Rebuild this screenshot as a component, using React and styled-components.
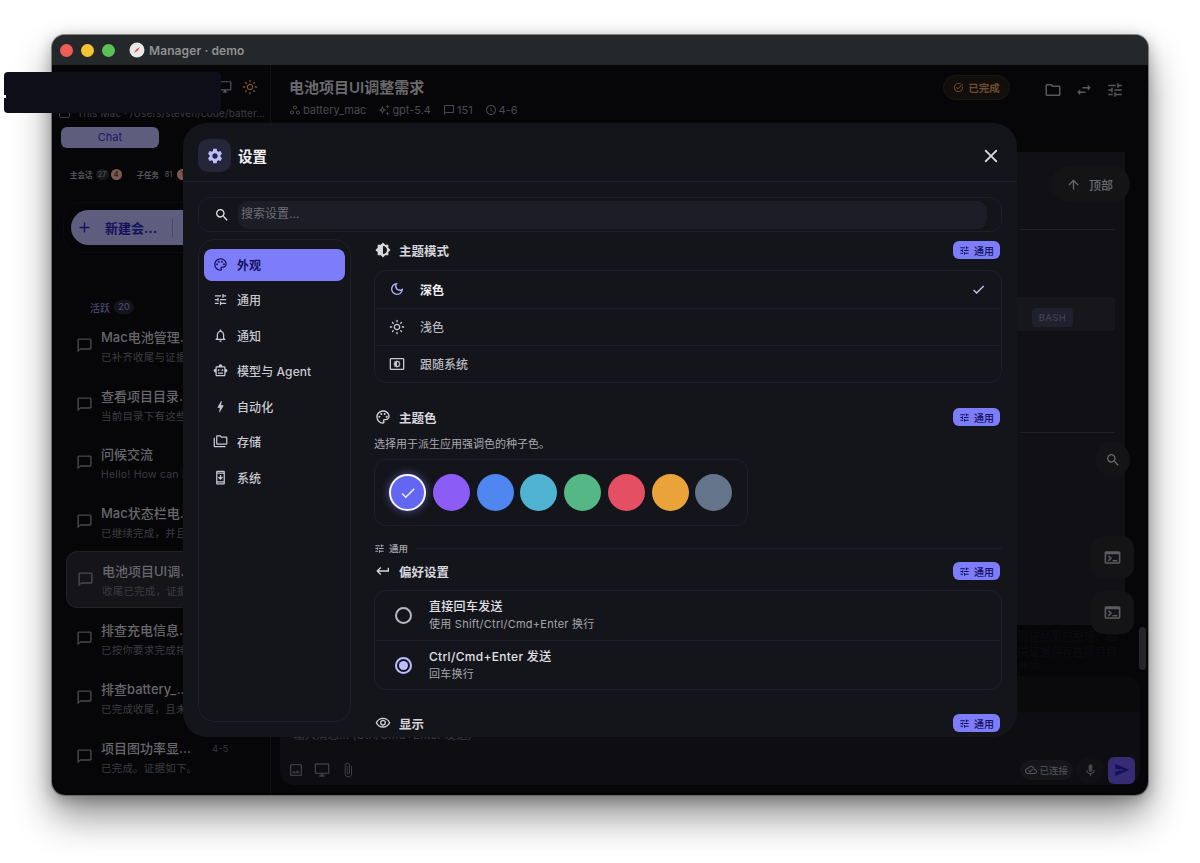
import React from 'react';
import styled, { createGlobalStyle } from 'styled-components';
import {
  MdAdd, MdArrowUpward, MdBolt, MdBrightnessMedium, MdCheck, MdClose, MdKeyboardReturn,
  MdOutlineAttachFile, MdOutlineAutoAwesome, MdOutlineChatBubbleOutline, MdOutlineCloudDone,
  MdOutlineDarkMode, MdOutlineDesktopWindows, MdOutlineFolder, MdOutlineFolderCopy, MdOutlineImage,
  MdOutlineLightMode, MdOutlineMic, MdOutlineNotifications, MdOutlinePalette, MdOutlineSchedule,
  MdOutlineSecurityUpdate, MdOutlineSettingsBrightness, MdOutlineSmartToy, MdOutlineTaskAlt,
  MdOutlineVisibility, MdOutlineWorkspaces, MdSearch, MdSend, MdSettings, MdSwapHoriz, MdTerminal, MdTune,
} from 'react-icons/md';

const GlobalStyle = createGlobalStyle`
  html, body { margin: 0; padding: 0; background: #fff; }
  body { font-family: Inter, "Noto Sans CJK SC", sans-serif; }
  * { box-sizing: border-box; }
`;

const Page = styled.div`
  width: 1200px;
  height: 863px;
  padding: 35px 52px 68px;
  background: #fff;
  overflow: hidden;
`;

const Window = styled.div`
  position: relative;
  width: 1096px;
  height: 760px;
  border-radius: 13px;
  box-shadow: 0 0 0 1px rgba(90, 90, 90, 0.7), 0 22px 38px rgba(0, 0, 0, 0.42), 0 4px 16px rgba(0, 0, 0, 0.3);
`;

const Frame = styled.div`
  display: flex;
  flex-direction: column;
  height: 100%;
  border-radius: 13px;
  overflow: hidden;
  background: #060608;
`;

const TitleBar = styled.div`
  height: 30px;
  flex: none;
  display: flex;
  align-items: center;
  padding-left: 8px;
  background: #25282a;
  color: #8f9193;
  font-size: 12px;
  font-weight: 600;
  letter-spacing: 0.1px;
`;

const Light = styled.span`
  width: 13px;
  height: 13px;
  border-radius: 50%;
  margin-right: 8px;
  background: ${(p) => p.$color};
`;

const Logo = styled.svg`
  width: 16px;
  height: 16px;
  margin: 0 4px 0 6px;
`;

const Body = styled.div`
  flex: 1;
  display: flex;
  min-height: 0;
`;

const Sidebar = styled.aside`
  width: 219px;
  flex: none;
  border-right: 1px solid #101013;
  padding: 10px 0 0 9px;
  overflow: hidden;
`;

const SideIcons = styled.div`
  display: flex;
  justify-content: flex-end;
  align-items: center;
  gap: 10px;
  height: 24px;
  padding-right: 12px;
  color: #7a5230;
`;

const PathRow = styled.div`
  display: flex;
  align-items: center;
  gap: 7px;
  height: 16px;
  margin: 6px 0 0 -2px;
  color: #3d3d42;
  font-size: 10px;
  letter-spacing: 0.1px;
  white-space: nowrap;
  overflow: hidden;
`;

const PathBox = styled.span`
  width: 11px;
  height: 9px;
  border: 1px solid #3d3d42;
  border-radius: 2px;
  flex: none;
`;

const ChatTab = styled.div`
  width: 98px;
  height: 21px;
  margin-top: 6px;
  border-radius: 6px;
  background: #5d5d7e;
  color: #1a1866;
  font-size: 11px;
  line-height: 21px;
  text-align: center;
`;

const Stats = styled.div`
  display: flex;
  align-items: center;
  height: 22px;
  margin-top: 15px;
  padding-left: 9px;
  color: #55555c;
  font-size: 7.5px;
  font-weight: 600;
  white-space: nowrap;
`;

const StatChip = styled.span`
  min-width: 13px;
  height: 11px;
  margin: 0 2px 0 3px;
  border-radius: 6px;
  background: ${(p) => (p.$plain ? 'transparent' : '#17171c')};
  color: #4a4a52;
  font-size: 7px;
  line-height: 11px;
  text-align: center;
`;

const StatBadge = styled.span`
  width: 11px;
  height: 11px;
  flex: none;
  margin-right: ${(p) => p.$gap || 0}px;
  border-radius: 50%;
  background: #7d5a50;
  color: #2a1a16;
  font-size: 7px;
  line-height: 11px;
  text-align: center;
`;

const NewBox = styled.div`
  width: 200px;
  margin: 17px 0 0 2px;
  padding: 7px;
  border: 1px solid #0c0c10;
  border-radius: 16px;
`;

const NewButton = styled.div`
  display: flex;
  align-items: center;
  height: 35px;
  padding-left: 5px;
  border-radius: 18px;
  background: #5d5d7e;
  color: #14125a;
  font-size: 13px;
  font-weight: 700;
  white-space: nowrap;

  span { margin-left: 12px; }
  i { width: 1px; height: 18px; margin-left: 15px; background: #494966; }
`;

const SectionHead = styled.div`
  display: flex;
  align-items: center;
  height: 22px;
  margin: 43px 0 0 1px;
  padding-left: 28px;
  color: #45456a;
  font-size: 10px;
  font-weight: 500;

  b {
    margin-left: 4px;
    padding: 0 4px;
    border-radius: 7px;
    background: #14141a;
    font-size: 9.5px;
    font-weight: 500;
    line-height: 14px;
  }
`;

const List = styled.div`
  display: grid;
  grid-auto-rows: 58.7px;
  margin-left: 5px;
  margin-top: -2px;
  width: 205px;
`;

const Item = styled.div`
  display: flex;
  align-items: center;
  gap: 8px;
  height: ${(p) => (p.$active ? '57px' : 'auto')};
  padding-left: 10px;
  border: ${(p) => (p.$active ? '1px solid #212128' : 'none')};
  border-radius: 11px;
  background: ${(p) => (p.$active ? '#141419' : 'transparent')};
  color: #48484d;
`;

const ItemText = styled.div`
  min-width: 0;
  flex: 1;
  margin-top: 3px;
`;

const ItemTop = styled.div`
  display: flex;
  align-items: center;
`;

const ItemTitle = styled.div`
  width: 91px;
  overflow: hidden;
  text-overflow: ellipsis;
  white-space: nowrap;
  color: #67676b;
  font-size: 13px;
  font-weight: 500;
  line-height: 19px;
`;

const ItemDate = styled.span`
  margin-left: 20px;
  color: #39393e;
  font-size: 9.5px;
`;

const ItemSub = styled.div`
  margin-top: 3px;
  width: 170px;
  overflow: hidden;
  white-space: nowrap;
  color: #3c3c41;
  font-size: 10.5px;
  letter-spacing: 0.2px;
  line-height: 16px;
`;

const Main = styled.main`
  position: relative;
  flex: 1;
  min-width: 0;
  display: flex;
  flex-direction: column;
  padding: 0 8px 10px 9px;
`;

const Header = styled.header`
  display: flex;
  height: 57px;
  padding: 11px 16px 0 9px;
`;

const HeaderText = styled.div`
  flex: 1;
`;

const Title = styled.div`
  color: #6a6a6e;
  font-size: 15px;
  font-weight: 600;
  line-height: 24px;
`;

const Meta = styled.div`
  display: flex;
  align-items: center;
  gap: 12px;
  margin-top: 3px;
  color: #49494e;
  font-size: 11px;

  span { display: flex; align-items: center; gap: 2px; }
`;

const StatusPill = styled.div`
  display: flex;
  align-items: center;
  justify-content: center;
  gap: 4px;
  width: 67px;
  height: 25px;
  margin-top: -1px;
  border-radius: 13px;
  border: 1px solid #1c1714;
  background: #110e0c;
  color: #6d4c34;
  font-size: 10.5px;
  font-weight: 600;
`;

const HeadIcons = styled.div`
  display: flex;
  gap: 13px;
  margin: 5px 0 0 34px;
  color: #59595c;
`;

const Stage = styled.div`
  position: relative;
  height: 554px;
  flex: none;
  padding-top: 30px;
  padding-right: 15px;
  overflow: visible;
`;

const Panel = styled.div`
  height: 473px;
  padding: 77px 10px 0 0;
  background: #111115;
`;

const Rule = styled.div`
  height: 1px;
  margin-left: 740px;
  background: #212126;
`;

const BashRow = styled.div`
  height: 34px;
  margin: 67px 0 0 730px;
  padding: 11px 0 0 22px;
  border-radius: 4px;
  background: #17171b;
`;

const BashChip = styled.div`
  width: 41px;
  height: 19px;
  border-radius: 4px;
  background: #20202e;
  color: #45455a;
  font-size: 9.5px;
  line-height: 19px;
  letter-spacing: 0.4px;
  text-align: center;
`;

const LowerRule = styled(Rule)`
  margin-top: 101px;
`;

const TopButton = styled.div`
  position: absolute;
  top: 44px;
  right: 10px;
  display: flex;
  align-items: center;
  gap: 8px;
  width: 79px;
  height: 36px;
  padding-left: 15px;
  border-radius: 18px;
  background: #141417;
  color: #6b6b6e;
  font-size: 12px;
  font-weight: 500;
`;

const RoundButton = styled.div`
  position: absolute;
  top: 320px;
  right: 10px;
  display: flex;
  align-items: center;
  justify-content: center;
  width: 35px;
  height: 35px;
  border-radius: 50%;
  background: #141417;
  color: #66666a;
`;

const SquareButton = styled.div`
  position: absolute;
  top: ${(p) => p.$top}px;
  right: 6px;
  display: flex;
  align-items: center;
  justify-content: center;
  width: 43px;
  height: 43px;
  border-radius: 13px;
  background: #141417;
  color: #5c5c60;
`;

const Scrollbar = styled.div`
  position: absolute;
  top: 505px;
  right: -6px;
  width: 7px;
  height: 43px;
  border-radius: 4px;
  background: #26262a;
`;

const FaintText = styled.div`
  height: 44px;
  padding-top: 5px;
  margin-left: 738px;
  color: #0d0d11;
  font-size: 11px;
  line-height: 15px;
  overflow: hidden;
`;

const Composer = styled.div`
  flex: 1;
  display: flex;
  flex-direction: column;
  border-radius: 14px;
  background: #0e0e12;
  overflow: hidden;
`;

const ComposerTop = styled.div`
  height: 36px;
  flex: none;
  background: #0a0a0d;
`;

const Placeholder = styled.div`
  padding: 15px 0 0 13px;
  color: #3a3a3f;
  font-size: 11.5px;
  line-height: 16px;
`;

const ComposerBar = styled.div`
  display: flex;
  align-items: center;
  height: 30px;
  margin-top: 12px;
  padding: 0 5px 0 8px;
  color: #3c3c41;
`;

const BarIcons = styled.div`
  display: flex;
  gap: 10px;
  flex: 1;
`;

const Online = styled.div`
  display: flex;
  align-items: center;
  gap: 2px;
  height: 20px;
  padding: 0 5px;
  border-radius: 10px;
  background: #15151a;
  color: #55555c;
  font-size: 9.5px;
`;

const Mic = styled.div`
  display: flex;
  align-items: center;
  justify-content: center;
  width: 28px;
  height: 28px;
  margin: 0 4px 0 3px;
  border-radius: 50%;
  background: #111114;
  color: #46464a;
`;

const SendButton = styled.div`
  display: flex;
  align-items: center;
  justify-content: center;
  width: 27px;
  height: 27px;
  border-radius: 6px;
  background: #372c74;
  color: #14105e;
`;

const Modal = styled.section`
  position: absolute;
  left: 131px;
  top: 88px;
  z-index: 2;
  display: flex;
  flex-direction: column;
  width: 834px;
  height: 614px;
  border-radius: 24px;
  background: #14151a;
  overflow: hidden;
`;

const ModalHeader = styled.div`
  display: flex;
  align-items: center;
  height: 59px;
  flex: none;
  padding: 7px 15px 0;
  border-bottom: 1px solid #1f2029;
  color: #f1f1f4;
  font-size: 14.5px;
  font-weight: 700;
`;

const GearBox = styled.div`
  display: flex;
  align-items: center;
  justify-content: center;
  width: 33px;
  height: 33px;
  margin-right: 7px;
  border-radius: 10px;
  background: #25263a;
  color: #bdbdff;
`;

const CloseButton = styled.div`
  display: flex;
  margin: 0 0 0 auto;
  color: #d8d8dc;
`;

const SearchBox = styled.div`
  display: flex;
  align-items: center;
  flex: none;
  height: 35px;
  margin: 15px 15px 0;
  padding: 0 14px 0 15px;
  border: 1px solid #1e1f28;
  border-radius: 12px;
  color: #e0e0e4;
`;

const SearchField = styled.div`
  flex: 1;
  height: 28px;
  margin-left: 8px;
  padding-left: 3px;
  border-radius: 10px;
  background: #1c1d27;
  color: #6e6e76;
  font-size: 12px;
  line-height: 26px;
`;

const ModalBody = styled.div`
  flex: 1;
  min-height: 0;
  display: flex;
  align-items: flex-start;
  gap: 23px;
  margin-top: 7px;
  padding: 0 15px;
`;

const Nav = styled.nav`
  flex: none;
  width: 153px;
  height: 483px;
  padding: 9px 5px;
  border: 1px solid #1e1f28;
  border-radius: 16px;
`;

const NavItem = styled.div`
  display: flex;
  align-items: center;
  gap: 9px;
  height: 32px;
  margin-bottom: 3.6px;
  padding: 0 0 2px 9px;
  border-radius: 8px;
  background: ${(p) => (p.$active ? '#7d7dfa' : 'transparent')};
  color: ${(p) => (p.$active ? '#14125a' : '#c8c8d0')};
  font-size: 12px;
  letter-spacing: 0.1px;
  font-weight: ${(p) => (p.$active ? 700 : 500)};
  white-space: nowrap;
`;

const Content = styled.div`
  flex: 1;
  min-width: 0;
  height: 100%;
  overflow: hidden;
  padding-top: 1px;
`;

const Head = styled.div`
  display: flex;
  align-items: center;
  gap: 8px;
  height: 20px;
  margin-top: ${(p) => p.$top || 0}px;
  padding: 0 2px 0 1px;
  color: #d6d6dc;
  font-size: 12.5px;
  font-weight: 700;
`;

const Badge = styled.span`
  display: flex;
  align-items: center;
  gap: 4px;
  height: 18px;
  margin-left: auto;
  padding: 0 6px;
  border-radius: 6px;
  background: #7d7dfa;
  color: #14125a;
  font-size: 10px;
  font-weight: 500;
`;

const Card = styled.div`
  margin-top: ${(p) => p.$top || 9}px;
  border: 1px solid #1e1f28;
  border-radius: 12px;
`;

const ModeRow = styled.div`
  display: flex;
  align-items: center;
  gap: 15px;
  height: 37px;
  padding: 0 15px 1px 14px;
  border-top: ${(p) => (p.$first ? 'none' : '1px solid #1c1d25')};
  color: ${(p) => (p.$on ? '#f0f0f4' : '#b8b8c0')};
  font-size: 12px;
  font-weight: ${(p) => (p.$on ? 700 : 500)};

  svg:first-child { color: ${(p) => (p.$on ? '#b4b4ff' : '#c8c8d0')}; }
  svg:last-child:not(:first-child) { margin-left: auto; color: #c4c4f4; }
`;

const Desc = styled.div`
  margin-top: 8px;
  color: #a8a8b0;
  font-size: 11px;
  line-height: 18px;
`;

const SwatchCard = styled.div`
  display: flex;
  gap: 6.75px;
  width: 374px;
  height: 67px;
  margin-top: 6px;
  padding: 14px 14px;
  border: 1px solid #1e1f28;
  border-radius: 12px;
`;

const Swatch = styled.div`
  display: flex;
  align-items: center;
  justify-content: center;
  width: 37px;
  height: 37px;
  flex: none;
  border-radius: 50%;
  background: ${(p) => p.$color};
  color: #eeeeff;
  ${(p) => p.$on && 'border: 2px solid #f4f4ff; box-shadow: 0 0 8px rgba(125, 125, 250, 0.6);'}
`;

const GroupLabel = styled.div`
  display: flex;
  align-items: center;
  gap: 4px;
  height: 16px;
  margin-top: 14px;
  color: #a8a8b0;
  font-size: 9.5px;
  font-weight: 500;

  i { flex: 1; height: 1px; margin-left: 4px; background: #1c1d25; }
`;

const RadioRow = styled.div`
  display: flex;
  align-items: center;
  gap: 17px;
  height: 49px;
  padding-left: 20px;
  border-top: ${(p) => (p.$first ? 'none' : '1px solid #1c1d25')};
`;

const Radio = styled.span`
  display: flex;
  align-items: center;
  justify-content: center;
  width: 17px;
  height: 17px;
  flex: none;
  border-radius: 50%;
  border: 2px solid ${(p) => (p.$on ? '#bdbdff' : '#b8b8c0')};

  &::after {
    content: "";
    width: 9px;
    height: 9px;
    border-radius: 50%;
    background: ${(p) => (p.$on ? '#bdbdff' : 'transparent')};
  }
`;

const RadioTitle = styled.div`
  color: #e0e0e6;
  font-size: 12px;
  font-weight: 500;
  letter-spacing: 0.3px;
  line-height: 16px;
`;

const RadioSub = styled.div`
  margin-top: 2px;
  color: #a4a4ac;
  font-size: 11px;
  letter-spacing: 0.25px;
  line-height: 15px;
`;

const Redaction = styled.div`
  position: absolute;
  left: -48px;
  top: 37px;
  z-index: 3;
  width: 217px;
  height: 41px;
  border-radius: 4px;
  background: #0e0e18;

  &::after {
    content: "";
    position: absolute;
    left: 0;
    top: 23px;
    width: 2px;
    height: 3px;
    background: #fff;
  }
`;

const chats = [
  { title: 'Mac电池管理项目收尾', sub: '已补齐收尾与证据说明，可以继续' },
  { title: '查看项目目录结构', sub: '当前目录下有这些文件和子目录' },
  { title: '问候交流', sub: 'Hello! How can I help you today?' },
  { title: 'Mac状态栏电量显示', sub: '已继续完成，并且补充了验证' },
  { title: '电池项目UI调整需求', sub: '收尾已完成，证据如下所示', active: true },
  { title: '排查充电信息读取', sub: '已按你要求完成排查并记录' },
  { title: '排查battery_mac问题', sub: '已完成收尾，且未发现新问题' },
  { title: '项目图功率显示问题', sub: '已完成。证据如下。', date: '4-5' },
];

const navItems = [
  { label: '外观', icon: MdOutlinePalette, active: true },
  { label: '通用', icon: MdTune },
  { label: '通知', icon: MdOutlineNotifications },
  { label: '模型与 Agent', icon: MdOutlineSmartToy },
  { label: '自动化', icon: MdBolt },
  { label: '存储', icon: MdOutlineFolderCopy },
  { label: '系统', icon: MdOutlineSecurityUpdate },
];

const swatches = ['#6366f1', '#8b5cf6', '#4f86f0', '#4fb3d1', '#55b686', '#e44f64', '#eaa23a', '#64748b'];

const GeneralBadge = () => (
  <Badge><MdTune size={11} />通用</Badge>
);

export default function App() {
  return (
    <Page>
      <GlobalStyle />
      <Window>
        <Frame>
          <TitleBar>
            <Light $color="#f25c58" />
            <Light $color="#f6c433" />
            <Light $color="#5bc257" />
            <Logo viewBox="0 0 16 16">
              <circle cx="8" cy="8" r="7.5" fill="#e8e8e8" />
              <path d="M11 5 L8.8 8.8 L5 11 L7.2 7.2 Z" fill="#e2574c" />
            </Logo>
            Manager · demo
          </TitleBar>
          <Body>
            <Sidebar>
              <SideIcons>
                <MdOutlineDesktopWindows size={14} color="#55555c" />
                <MdOutlineLightMode size={16} />
              </SideIcons>
              <PathRow><PathBox />This Mac · /Users/steven/code/batter…</PathRow>
              <ChatTab>Chat</ChatTab>
              <Stats>
                主会话<StatChip>27</StatChip><StatBadge $gap={15}>4</StatBadge>
                子任务<StatChip $plain>81</StatChip><StatBadge>1</StatBadge>
              </Stats>
              <NewBox>
                <NewButton>
                  <MdAdd size={17} /><span>新建会…</span><i />
                </NewButton>
              </NewBox>
              <SectionHead>活跃<b>20</b></SectionHead>
              <List>
                {chats.map((c) => (
                  <Item key={c.title} $active={c.active}>
                    <MdOutlineChatBubbleOutline size={17} />
                    <ItemText>
                      <ItemTop>
                        <ItemTitle>{c.title}</ItemTitle>
                        {c.date && <ItemDate>{c.date}</ItemDate>}
                      </ItemTop>
                      <ItemSub>{c.sub}</ItemSub>
                    </ItemText>
                  </Item>
                ))}
              </List>
            </Sidebar>
            <Main>
              <Header>
                <HeaderText>
                  <Title>电池项目UI调整需求</Title>
                  <Meta>
                    <span><MdOutlineWorkspaces size={12} />battery_mac</span>
                    <span><MdOutlineAutoAwesome size={12} />gpt-5.4</span>
                    <span><MdOutlineChatBubbleOutline size={12} />151</span>
                    <span><MdOutlineSchedule size={12} />4-6</span>
                  </Meta>
                </HeaderText>
                <StatusPill><MdOutlineTaskAlt size={11} />已完成</StatusPill>
                <HeadIcons>
                  <MdOutlineFolder size={18} />
                  <MdSwapHoriz size={18} />
                  <MdTune size={18} />
                </HeadIcons>
              </Header>
              <Stage>
                <Panel>
                  <Rule />
                  <BashRow><BashChip>BASH</BashChip></BashRow>
                  <LowerRule />
                </Panel>
                <FaintText>验证结果已整理，相关证据保存在项目目录内</FaintText>
                <TopButton><MdArrowUpward size={15} />顶部</TopButton>
                <RoundButton><MdSearch size={16} /></RoundButton>
                <SquareButton $top={414}><MdTerminal size={19} /></SquareButton>
                <SquareButton $top={469}><MdTerminal size={19} /></SquareButton>
                <Scrollbar />
              </Stage>
              <Composer>
                <ComposerTop />
                <Placeholder>输入消息... (Ctrl/Cmd+Enter 发送)</Placeholder>
                <ComposerBar>
                  <BarIcons>
                    <MdOutlineImage size={16} />
                    <MdOutlineDesktopWindows size={16} />
                    <MdOutlineAttachFile size={16} />
                  </BarIcons>
                  <Online><MdOutlineCloudDone size={12} />已连接</Online>
                  <Mic><MdOutlineMic size={15} /></Mic>
                  <SendButton><MdSend size={16} /></SendButton>
                </ComposerBar>
              </Composer>
            </Main>
          </Body>
        </Frame>

        <Modal>
          <ModalHeader>
            <GearBox><MdSettings size={18} /></GearBox>
            设置
            <CloseButton><MdClose size={22} /></CloseButton>
          </ModalHeader>
          <SearchBox>
            <MdSearch size={16} />
            <SearchField>搜索设置...</SearchField>
          </SearchBox>
          <ModalBody>
            <Nav>
              {navItems.map(({ label, icon: Icon, active }) => (
                <NavItem key={label} $active={active}>
                  <Icon size={15} />
                  {label}
                </NavItem>
              ))}
            </Nav>
            <Content>
              <Head><MdBrightnessMedium size={16} />主题模式<GeneralBadge /></Head>
              <Card $top={10}>
                <ModeRow $first $on><MdOutlineDarkMode size={16} />深色<MdCheck size={15} /></ModeRow>
                <ModeRow><MdOutlineLightMode size={16} />浅色</ModeRow>
                <ModeRow><MdOutlineSettingsBrightness size={16} />跟随系统</ModeRow>
              </Card>
              <Head $top={24}><MdOutlinePalette size={16} />主题色<GeneralBadge /></Head>
              <Desc>选择用于派生应用强调色的种子色。</Desc>
              <SwatchCard>
                {swatches.map((color, i) => (
                  <Swatch key={color} $color={color} $on={i === 0}>
                    {i === 0 && <MdCheck size={18} />}
                  </Swatch>
                ))}
              </SwatchCard>
              <GroupLabel><MdTune size={11} />通用<i /></GroupLabel>
              <Head $top={5}><MdKeyboardReturn size={16} />偏好设置<GeneralBadge /></Head>
              <Card>
                <RadioRow $first>
                  <Radio />
                  <div>
                    <RadioTitle>直接回车发送</RadioTitle>
                    <RadioSub>使用 Shift/Ctrl/Cmd+Enter 换行</RadioSub>
                  </div>
                </RadioRow>
                <RadioRow>
                  <Radio $on />
                  <div>
                    <RadioTitle>Ctrl/Cmd+Enter 发送</RadioTitle>
                    <RadioSub>回车换行</RadioSub>
                  </div>
                </RadioRow>
              </Card>
              <Head $top={23}><MdOutlineVisibility size={16} />显示<GeneralBadge /></Head>
            </Content>
          </ModalBody>
        </Modal>

        <Redaction />
      </Window>
    </Page>
  );
}
